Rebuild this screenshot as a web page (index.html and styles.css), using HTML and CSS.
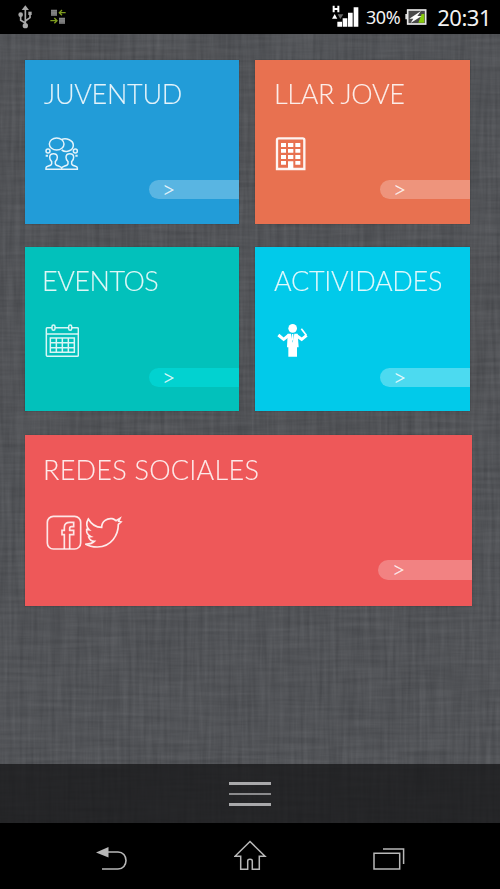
FILE: index.html
```html
<!DOCTYPE html>
<html lang="es">
<head>
    <meta charset="UTF-8">
    <meta name="viewport" content="width=device-width, initial-scale=1.0">
    <title>Juventud</title>
    <link rel="stylesheet" href="styles.css">
</head>
<body>
    <div class="phone">
        <!-- linen texture -->
        <svg class="linen" width="500" height="889">
            <filter id="threadsV" x="0" y="0" width="100%" height="100%" color-interpolation-filters="sRGB">
                <feTurbulence type="fractalNoise" baseFrequency="0.25 0.015" numOctaves="3" seed="4"/>
                <feColorMatrix values="0.14 0 0 0 0.250  0.14 0 0 0 0.257  0.14 0 0 0 0.272  0 0 0 0 1"/>
            </filter>
            <filter id="threadsH" x="0" y="0" width="100%" height="100%" color-interpolation-filters="sRGB">
                <feTurbulence type="fractalNoise" baseFrequency="0.015 0.25" numOctaves="3" seed="9"/>
                <feColorMatrix values="0.14 0 0 0 0.250  0.14 0 0 0 0.257  0.14 0 0 0 0.272  0 0 0 0 0.45"/>
            </filter>
            <rect width="500" height="889" filter="url(#threadsV)"/>
            <rect width="500" height="889" filter="url(#threadsH)"/>
        </svg>

        <header class="status">
            <svg class="usb" width="14" height="24" viewBox="0 0 42 72">
                <g fill="none" stroke="#a9a9a9" stroke-width="5">
                    <path d="M22 10V62M22 54L8 46V28M22 48L36 38V24"/>
                </g>
                <g fill="#a9a9a9"><path d="M22 1L33 15H11Z"/><circle cx="22" cy="62" r="8"/><circle cx="8" cy="29" r="7"/><path d="M31 20h10v10H31z"/></g>
            </svg>
            <svg class="transfer" width="16" height="16" viewBox="0 0 48 48">
                <path d="M3 2h18v18H3zM27 26h18v18H27z" fill="#8b8b8b"/>
                <path d="M3 7h18M3 12h18M3 17h18M27 31h18M27 36h18M27 41h18" stroke="#666" stroke-width="2"/>
                <path d="M47 11H29M36 3L28 11L36 19M1 35H20M13 27L21 35L13 43" fill="none" stroke="#7e9c1d" stroke-width="4"/>
            </svg>
            <svg class="signal" width="28" height="24" viewBox="0 0 84 72">
                <path d="M8 2V22M22 2V22M8 12H22" stroke="#fff" stroke-width="6"/>
                <path d="M3 41L11 27L19 41Z" fill="#fff"/>
                <path d="M20 28H37L28 42Z" fill="#666"/>
                <path d="M19 50h14v15H19zM35 40h14v25H35zM51 23h14v42H51zM68 7h14v58H68z" fill="#fff"/>
            </svg>
            <span class="percent">30%</span>
            <svg class="battery" width="22" height="18" viewBox="0 0 66 54">
                <path d="M1 18h5v16H1z" fill="#ddd"/>
                <rect x="8" y="6" width="54" height="42" fill="#4a4a4a" stroke="#e8e8e8" stroke-width="5"/>
                <path d="M50 18H58V44H40Z" fill="#86cb0b"/>
                <path d="M48 9L13 32H25L17 45L50 24H37Z" fill="#fff"/>
            </svg>
            <span class="clock">20:31</span>
        </header>

        <main class="tiles">
            <a class="tile blue">
                <span class="title">JUVENTUD</span>
                <svg class="icon" width="34" height="34" viewBox="0 0 102 102">
                    <g fill="none" stroke="#fff" stroke-opacity=".88" stroke-width="4.500">
                        <ellipse cx="35" cy="21" rx="22" ry="18"/>
                        <path d="M50 7C64 2 85 9 85 25C85 41 64 48 50 39"/>
                        <circle cx="9" cy="42" r="6"/><circle cx="91" cy="42" r="6"/>
                        <path d="M3 97V92C3 87 20 87 20 80V74C15 70 14 65 14 61C14 47 37 47 37 61C37 65 36 70 31 74V80C31 87 48 87 50 93C52 87 69 87 69 80V74C64 70 63 65 63 61C63 47 86 47 86 61C86 65 85 70 80 74V80C80 87 97 87 97 92V97Z"/>
                    </g>
                    <path d="M2 53h7v6H2zM91 53h7v6H91z" fill="#fff" fill-opacity=".85"/>
                </svg>
                <span class="more">&gt;</span>
            </a>
            <a class="tile orange">
                <span class="title">LLAR JOVE</span>
                <svg class="icon" width="34" height="34" viewBox="0 0 102 102">
                    <path d="M7 97V10Q7 5 12 5H84Q89 5 89 10V97Z" fill="none" stroke="#fff" stroke-opacity=".92" stroke-width="7" transform="translate(-1 -1)"/>
                    <path d="M18 18h15v12H18zM39 18h16v12H39zM61 18h15v12H61zM18 36h15v11H18zM39 36h16v11H39zM61 36h15v11H61zM18 54h15v12H18zM39 54h16v12H39zM61 54h15v12H61zM18 72h15v11H18zM61 72h15v11H61zM39 73h16v24H39z" fill="#fff"/>
                </svg>
                <span class="more">&gt;</span>
            </a>
            <a class="tile teal">
                <span class="title">EVENTOS</span>
                <svg class="icon" width="34" height="34" viewBox="0 0 102 102">
                    <g fill="none" stroke="#fff" stroke-opacity=".85" stroke-width="4.500">
                        <path d="M20 11H6Q4 11 4 14V94Q4 97 7 97H97Q100 97 100 94V14Q100 11 97 11H81M31 11H70M4 30H100"/>
                        <rect x="21" y="3" width="9" height="16" rx="4.500"/><rect x="71" y="3" width="9" height="16" rx="4.500"/>
                        <path d="M16 42H88V85H16ZM16 56H88M16 71H88M34 42V85M52 42V85M70 42V85"/>
                    </g>
                </svg>
                <span class="more">&gt;</span>
            </a>
            <a class="tile cyan">
                <span class="title">ACTIVIDADES</span>
                <svg class="icon" width="34" height="34" viewBox="0 0 102 102">
                    <circle cx="53" cy="13" r="13" fill="#fff"/>
                    <path d="M10 33L26 46L42 33M62 33L80 46L95 34" fill="none" stroke="#fff" stroke-width="9"/>
                    <path d="M79 14L94 34" stroke="#fff" stroke-width="5"/>
                    <path d="M38 29H48L53 56L58 29H68L71 70H66V98H40V70H36Z" fill="#fff"/>
                    <path d="M51 30H55L56 46L53 51L50 46Z" fill="#fff"/>
                </svg>
                <span class="more">&gt;</span>
            </a>
            <a class="tile red">
                <span class="title">REDES SOCIALES</span>
                <div class="social">
                    <svg width="36" height="35" viewBox="0 0 108 105">
                        <g fill="none" stroke="#fff" stroke-opacity=".85" stroke-width="5">
                            <rect x="4" y="4" width="100" height="98" rx="18"/>
                            <path d="M55 102V59H48V46H55V37C55 26 62 22 72 22H83V35H76Q71 35 71 40V46H83V59H71V102"/>
                        </g>
                    </svg>
                    <svg width="39" height="35" viewBox="0 0 117 105">
                        <path d="M13 12C22 28 38 37 53 37C53 18 70 9 84 11C90 12 93 15 96 17L108 10L104 19L111 21L103 28C103 59 83 96 40 96C24 96 12 92 4 87C15 88 25 85 31 79C21 79 16 72 14 66L21 65C11 60 7 51 8 43L15 44C7 37 6 23 13 12Z" fill="none" stroke="#fff" stroke-opacity=".88" stroke-width="5"/>
                    </svg>
                </div>
                <span class="more">&gt;</span>
            </a>
        </main>

        <div class="menu-bar">
            <div class="menu"><i></i><i class="thin"></i><i></i></div>
        </div>

        <nav class="nav">
            <svg width="34" height="36" viewBox="0 0 34 36">
                <path d="M1 13.500L13.500 8V18.500Z" fill="#b8b8b8"/>
                <path d="M12 13H23C28 13 31 17 31 21.500C31 26 28 30 23 30H7" fill="none" stroke="#b8b8b8" stroke-width="1.600"/>
            </svg>
            <svg width="34" height="36" viewBox="1 0 34 36">
                <path d="M17 2.500L2 17.300H7.700V30.300H14.700V22Q14.700 20.300 17 20.300Q19.300 20.300 19.300 22V30.300H26.300V17.300H32Z" fill="none" stroke="#b8b8b8" stroke-width="1.500"/>
            </svg>
            <svg width="34" height="36" viewBox="0 0 34 36">
                <path d="M2 14.300H27.700V30H2ZM11 10H31.600V25" fill="none" stroke="#b8b8b8" stroke-width="1.500"/>
            </svg>
        </nav>
    </div>
</body>
</html>
```
FILE: styles.css
```css
body {
    margin: 0;
    background-color: #505257;
    font-family: Lato, sans-serif;
}
.phone {
    position: relative;
    z-index: 0;
    display: flex;
    flex-direction: column;
    width: 500px;
    height: 889px;
    overflow: hidden;
    background-color: #54565b;
}
.linen {
    position: absolute;
    top: 0;
    left: 0;
    z-index: -1;
}
.status {
    display: flex;
    align-items: center;
    height: 34px;
    box-sizing: border-box;
    padding: 0 9px 0 18px;
    background-color: #000;
    color: #f2f2f2;
    font-family: "Noto Sans", sans-serif;
}
.transfer {
    margin-left: 18px;
}
.signal {
    margin-left: auto;
}
.percent {
    margin-left: 7px;
    font-size: 18px;
    letter-spacing: -0.4px;
}
.battery {
    margin-left: 5px;
}
.clock {
    margin-left: 10px;
    font-size: 22px;
    letter-spacing: -0.5px;
}
.tiles {
    flex: 1;
    display: grid;
    grid-template-columns: 214px 215px;
    grid-template-rows: 164px 164px 171px;
    column-gap: 16px;
    row-gap: 23.5px;
    padding: 25.700px 0 0 25px;
}
.tile {
    display: flex;
    flex-direction: column;
    color: #fff;
    box-shadow: 0 0 1px rgba(0, 0, 0, 0.4);
}
.blue { background-color: #229cd8; }
.orange { background-color: #e87150; }
.teal { background-color: #02c1bb; }
.cyan { background-color: #01caea; }
.red {
    grid-column: 1 / 3;
    width: 447px;
    background-color: #ee5859;
}
.title {
    height: 34px;
    padding: 17px 0 0 19px;
    font-size: 27px;
    line-height: 34px;
    font-weight: 300;
    letter-spacing: -0.3px;
    opacity: 0.88;
    white-space: nowrap;
    -webkit-text-stroke: 0.1px #fff;
}
.teal .title {
    padding-left: 17px;
    letter-spacing: -0.5px;
}
.red .title {
    padding-top: 18px;
    padding-left: 18px;
    letter-spacing: 0.25px;
}
.icon {
    margin: 26px 0 0 20px;
}
.social {
    display: flex;
    gap: 2px;
    margin: 28px 0 0 21px;
}
.more {
    align-self: flex-end;
    width: 90px;
    height: 19px;
    margin-top: 9.500px;
    box-sizing: border-box;
    padding-left: 13px;
    border-radius: 10px 0 0 10px;
    background-color: rgba(255, 255, 255, 0.25);
    color: rgba(255, 255, 255, 0.88);
    font-size: 23px;
    line-height: 18px;
    font-weight: 300;
    -webkit-text-stroke: 0.2px #fff;
}
.teal .more {
    background-color: #02d2d0;
}
.cyan .more {
    background-color: #4cdaf0;
}
.red .more {
    width: 94px;
    height: 20px;
    margin-top: 10px;
    padding-left: 14px;
}
.menu-bar {
    display: flex;
    justify-content: center;
    align-items: center;
    height: 59px;
    background-color: rgba(20, 20, 21, 0.72);
}
.menu {
    display: flex;
    flex-direction: column;
    gap: 8px;
    width: 42px;
}
.menu i {
    height: 3px;
    background-color: #a9a9ab;
}
.menu .thin {
    height: 2px;
    background-color: #8b8b8d;
}
.nav {
    display: flex;
    justify-content: space-between;
    height: 66px;
    box-sizing: border-box;
    padding: 16px 94px 0 95px;
    background-color: #000;
}
```
